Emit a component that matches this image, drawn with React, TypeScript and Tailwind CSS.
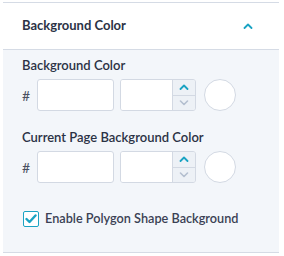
import React from "react";

function Up({ color }: { color: string }) {
  return (
    <svg width="10" height="6" viewBox="0 0 10 6" fill="none">
      <path d="M1.5 5L5 1.5L8.5 5" stroke={color} strokeWidth="1.8" strokeLinecap="round" strokeLinejoin="round" />
    </svg>
  );
}
function Down({ color }: { color: string }) {
  return (
    <svg width="10" height="6" viewBox="0 0 10 6" fill="none">
      <path d="M1.5 1L5 4.5L8.5 1" stroke={color} strokeWidth="1.6" strokeLinecap="round" strokeLinejoin="round" />
    </svg>
  );
}

function ColorRow() {
  return (
    <div className="flex items-center h-[32px]">
      <span className="w-[15px] text-[14px] text-[#4a5060]">#</span>
      <div className="w-[77px] h-[32px] bg-white border border-[#d3d9e3] rounded-[3px]" />
      <div className="ml-[6px] w-[76px] h-[32px] flex border border-[#d3d9e3] rounded-[3px] overflow-hidden">
        <div className="flex-1 bg-white" />
        <div className="w-[23px] flex flex-col bg-[#edf1f6] border-l border-[#d3d9e3]">
          <div className="flex-1 flex items-center justify-center border-b border-[#d3d9e3]">
            <Up color="#1aa3c3" />
          </div>
          <div className="flex-1 flex items-center justify-center">
            <Down color="#b4bfcf" />
          </div>
        </div>
      </div>
      <div className="ml-[8px] w-[32px] h-[32px] rounded-full bg-white border border-[#d3d9e3]" />
    </div>
  );
}

export default function App() {
  return (
    <div className="w-[284px] h-[256px] bg-white pt-[2px] pl-[3px] pr-[5px]" style={{ fontFamily: "Lato, 'Open Sans', sans-serif" }}>
      <div className="border-t border-b border-[#d5dbe5]">
        <div className="h-[47px] flex items-center justify-between pl-[19px] pr-[26px] border-b border-[#d5dbe5] bg-white">
          <span className="text-[13px] font-bold text-[#2b3245]">Background Color</span>
          <Up color="#1aa3c3" />
        </div>
        <div className="bg-[#f3f6fa] pl-[19px] pt-[7px] h-[202px]">
          <div className="text-[13px] font-semibold text-[#2b3245] leading-[16px] h-[16px]">Background Color</div>
          <div className="mt-[6px]"><ColorRow /></div>
          <div className="mt-[18px] text-[13px] font-semibold text-[#2b3245] leading-[16px]">Current Page Background Color</div>
          <div className="mt-[6px]"><ColorRow /></div>
          <div className="mt-[26px] flex items-center h-[20px]">
            <div className="w-[16px] h-[16px] ml-[1px] border-[1.5px] border-[#1aa3c3] rounded-[2px] bg-white flex items-center justify-center">
              <svg width="12" height="10" viewBox="0 0 12 10" fill="none">
                <path d="M1.5 5L4.5 8L10.5 1.5" stroke="#1aa3c3" strokeWidth="2.4" strokeLinecap="round" strokeLinejoin="round" />
              </svg>
            </div>
            <span className="ml-[6px] text-[12.7px] font-semibold text-[#3a4154]">Enable Polygon Shape Background</span>
          </div>
        </div>
      </div>
    </div>
  );
}
